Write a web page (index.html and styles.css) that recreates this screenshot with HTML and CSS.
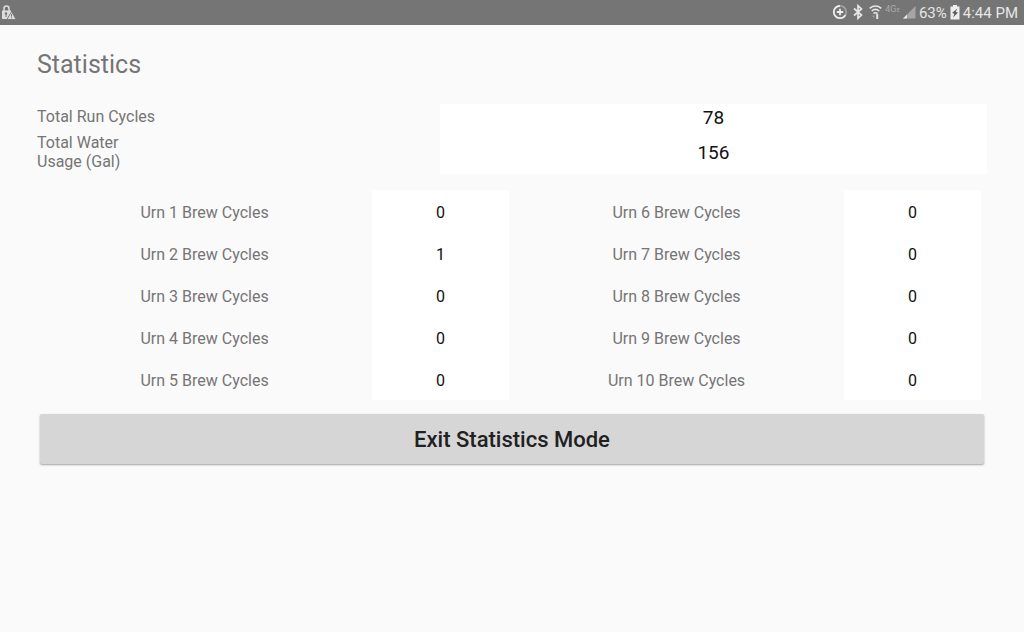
FILE: index.html
```html
<!DOCTYPE html>
<html lang="en">
<head>
<meta charset="utf-8">
<meta name="viewport" content="width=device-width, initial-scale=1">
<title>Statistics</title>
<link rel="stylesheet" href="styles.css">
</head>
<body>
<header class="status-bar">
  <svg class="icon" width="17" height="18" viewBox="0 0 17 18" aria-hidden="true">
    <path d="M4 8V5.500a2.500 2.500 0 0 1 5 0V8" fill="none" stroke="#ddd" stroke-width="1.500"/>
    <path d="M2 7.500h9v2L7 16H2z" fill="#ddd"/>
    <circle cx="6" cy="10.500" r="1.200" fill="#757575"/>
    <path d="M6 11v3" stroke="#757575"/>
    <path d="M11.500 8.500l4.500 8H7z" fill="#ddd" stroke="#757575" stroke-width=".8"/>
    <path d="M11.500 11v2.700M11.500 14.500v1" stroke="#757575"/>
  </svg>
  <div class="status-items">
    <svg class="icon" width="16" height="18" viewBox="0 0 16 18" aria-hidden="true">
      <circle cx="8" cy="9" r="6.200" fill="none" stroke="#a5a5a5" stroke-width="1.600"/>
      <path d="M8 2.800a6.200 6.200 0 1 0 5.400 9.300" fill="none" stroke="#eee" stroke-width="1.700"/>
      <path d="M8 5.800v6.400M4.800 9h6.400" stroke="#eee" stroke-width="1.800"/>
    </svg>
    <svg class="icon bluetooth" width="10" height="18" viewBox="0 0 10 18" aria-hidden="true">
      <path d="M1 5.500l7.500 6.500L5 15.300V2.700L8.500 6 1 12.500" fill="none" stroke="#e6e6e6" stroke-width="1.700"/>
    </svg>
    <svg class="icon wifi" width="13" height="18" viewBox="0 0 13 18" aria-hidden="true">
      <path d="M.7 5.300q5.800-4.600 11.600 0M2.700 8q3.800-3.100 7.600 0M4.500 10.500q2-1.500 4 0" fill="none" stroke="#e6e6e6" stroke-width="1.600"/>
      <path d="M3.200 12.500h2.600L4.500 15.500z" fill="#999"/>
      <path d="M8.200 11v5" fill="none" stroke="#e6e6e6" stroke-width="2"/>
    </svg>
    <span class="network">4G<small>E</small></span>
    <svg class="icon" width="13" height="18" viewBox="0 0 13 18" aria-hidden="true">
      <path d="M12.500 3v12.500H0z" fill="#a5a5a5"/>
      <path d="M4 11.500v4H0z" fill="#e6e6e6"/>
    </svg>
    <span class="status-text">63%</span>
    <svg class="icon" width="10" height="18" viewBox="0 0 10 18" aria-hidden="true">
      <path d="M3 2h4v1.500h2.500v13H.5v-13H3z" fill="#eee"/>
      <path d="M7.500 5.500L2 10l2.500.7L3 14.500 8 9.500l-2.500-.6z" fill="#555"/>
    </svg>
    <time class="status-text">4:44 PM</time>
  </div>
</header>
<main class="page">
  <h1 class="title">Statistics</h1>
  <table class="totals">
    <tr><th scope="row">Total Run Cycles</th><td>78</td></tr>
    <tr><th scope="row">Total Water<br>Usage (Gal)</th><td>156</td></tr>
  </table>
  <div class="details">
    <table class="urns">
      <tr><th scope="row">Urn 1 Brew Cycles</th><td>0</td><th scope="row">Urn 6 Brew Cycles</th><td>0</td></tr>
      <tr><th scope="row">Urn 2 Brew Cycles</th><td>1</td><th scope="row">Urn 7 Brew Cycles</th><td>0</td></tr>
      <tr><th scope="row">Urn 3 Brew Cycles</th><td>0</td><th scope="row">Urn 8 Brew Cycles</th><td>0</td></tr>
      <tr><th scope="row">Urn 4 Brew Cycles</th><td>0</td><th scope="row">Urn 9 Brew Cycles</th><td>0</td></tr>
      <tr><th scope="row">Urn 5 Brew Cycles</th><td>0</td><th scope="row">Urn 10 Brew Cycles</th><td>0</td></tr>
    </table>
    <button class="exit" type="button">Exit Statistics Mode</button>
  </div>
</main>
</body>
</html>
```
FILE: styles.css
```css
* { box-sizing: border-box; }

body {
  margin: 0;
  background: #fafafa;
  color: #757575;
  font: 16px/19px Roboto, "Liberation Sans", sans-serif;
}

.status-bar {
  display: flex;
  justify-content: space-between;
  align-items: center;
  height: 25px;
  padding: 0 6px 1px 0;
  background: #757575;
  color: #e6e6e6;
}

.status-items {
  display: flex;
  align-items: center;
  gap: 3px;
  font-size: 15px;
}

.icon { display: block; flex: none; }
.bluetooth { margin-left: 2px; }
.wifi { margin-left: 3px; }
.status-text { padding-top: 2px; }

.network {
  padding-bottom: 6px;
  color: #aaa;
  font-size: 9px;
  line-height: 10px;
}

.network small { font-size: 6px; }

.page { padding: 24px 37px; }

.title {
  margin: 0 0 24px;
  font-size: 25px;
  line-height: 31px;
  font-weight: 400;
}

table {
  width: 100%;
  border-collapse: collapse;
  table-layout: fixed;
}

th {
  padding: 0;
  font-weight: 400;
}

td {
  padding: 0;
  background: #fff;
  color: #111;
  text-align: center;
}

.totals th {
  width: 42.4%;
  padding: 3px 0 6px;
  text-align: left;
  vertical-align: top;
}

.totals tr + tr th { padding: 1px 0 3px; }
.totals td {
  padding-bottom: 1px;
  font-size: 19px;
}

.details { padding: 16px 6px 0 0; }

.urns tr { height: 42px; }
.urns th,
.urns td { padding-top: 2px; }
.urns th { width: 35.5%; }
.urns td { width: 14.5%; }

.exit {
  display: block;
  width: 100%;
  height: 50px;
  margin: 14px 0 0 3px;
  padding: 2px 0 0;
  border: 0;
  border-radius: 2px;
  background: #d6d6d6;
  box-shadow: 0 1px 2px rgba(0, 0, 0, .35);
  color: #212121;
  font: 500 22px/26px Roboto, "Liberation Sans", sans-serif;
}
```
